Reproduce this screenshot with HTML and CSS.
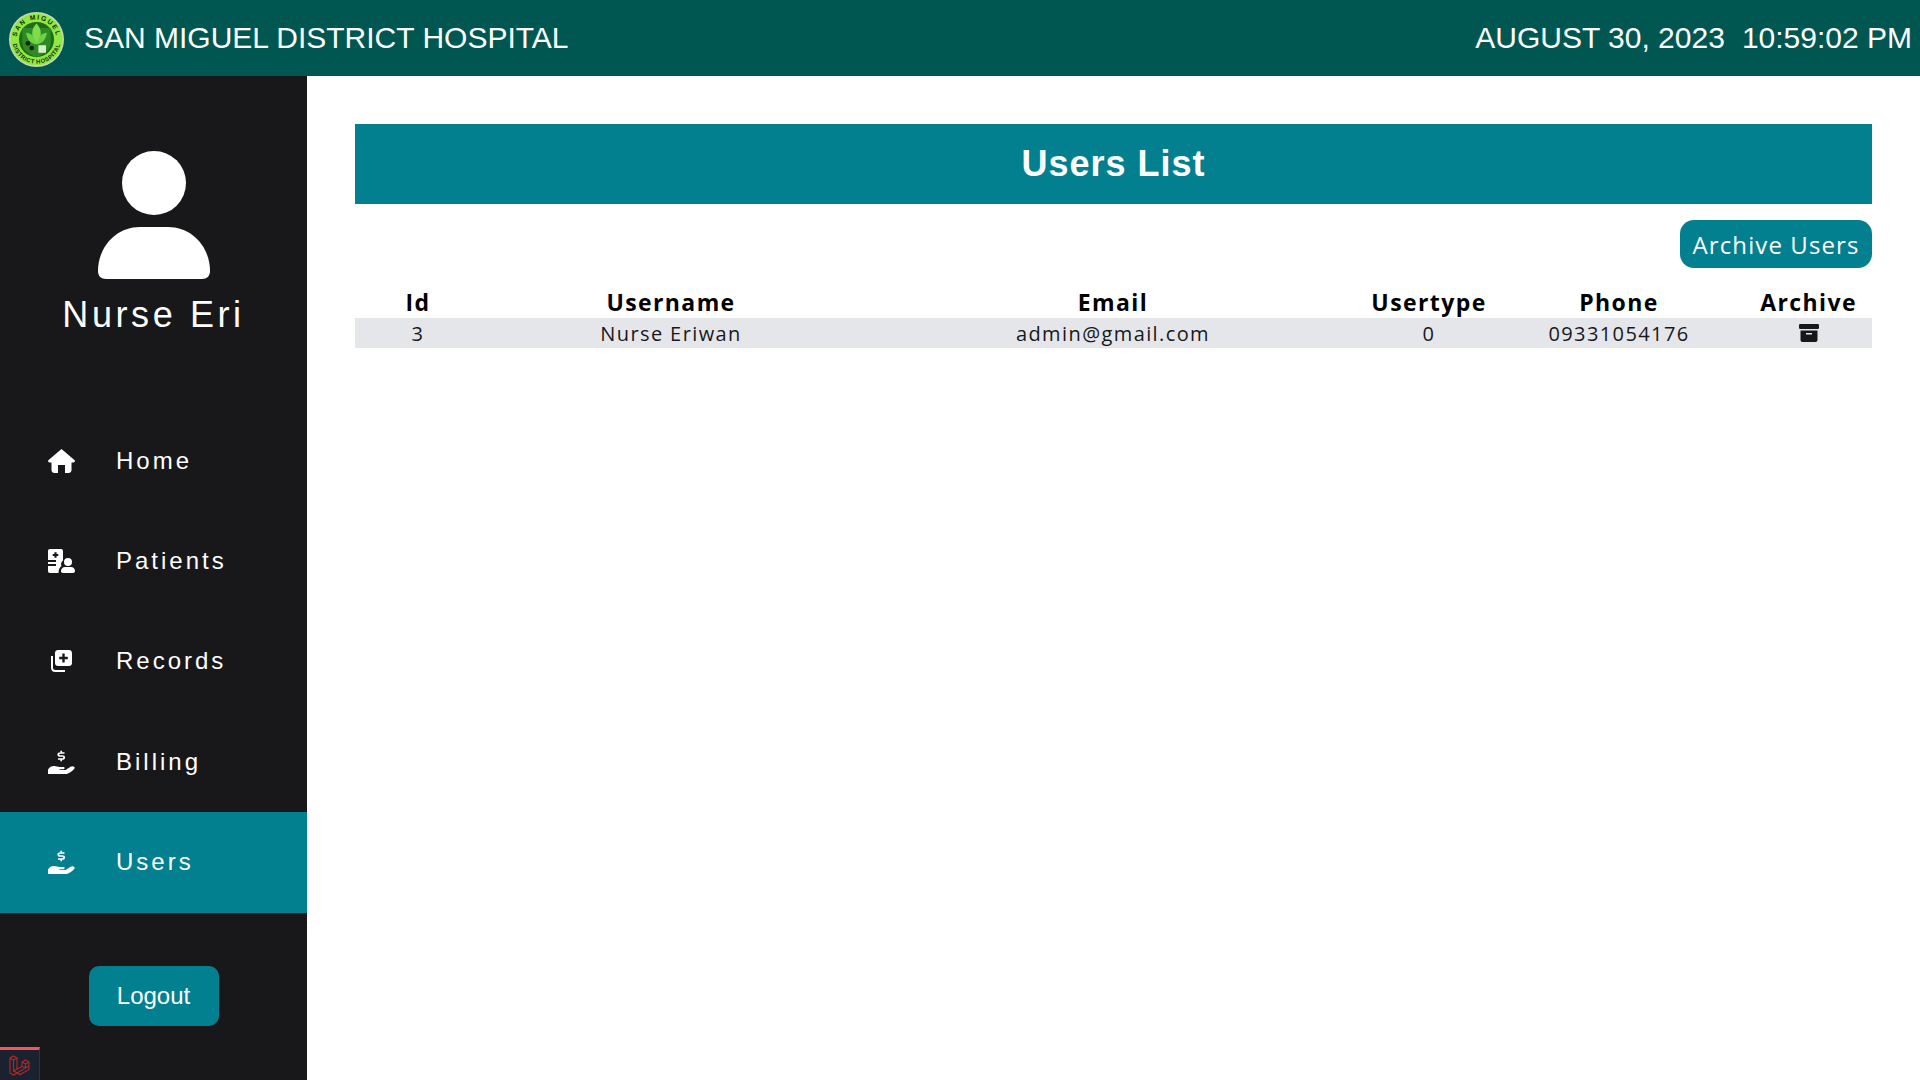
FILE: index.html
```html
<!DOCTYPE html>
<html lang="en">
<head>
    <meta charset="UTF-8">
    <title>Users List</title>
    <link rel="stylesheet" href="styles.css">
</head>
<body>
    <header class="topbar">
        <div class="brand">
            <svg class="logo" viewBox="0 0 58 58">
                <defs>
                    <path id="arcTop" d="M8 29a21 21 0 0 1 42 0"/>
                    <path id="arcBottom" d="M3.5 29a25.5 25.5 0 0 0 51 0"/>
                </defs>
                <circle cx="29" cy="29" r="29" fill="#c9d6b8"/>
                <circle cx="29" cy="29" r="27.5" fill="#8fea3e"/>
                <circle cx="29" cy="29" r="18.5" fill="#1f6b1c"/>
                <path d="M14 17h30v15c0 9-8 13-15 16-7-3-15-7-15-16z" fill="#2d8a24"/>
                <path d="M29 12c6 6 6 14 0 22-6-8-6-16 0-22z" fill="#7fdc4b"/>
                <path d="M18 22c5 0 9 4 11 12-6 0-10-5-11-12zM40 22c-5 0-9 4-11 12 6 0 10-5 11-12z" fill="#6fcf45"/>
                <rect x="31" y="35" width="8" height="8" fill="#d7ecc8"/>
                <circle cx="20" cy="33" r="2.5" fill="#0c2410"/>
                <circle cx="24" cy="38" r="2.5" fill="#0c2410"/>
                <text class="logo-text"><textPath href="#arcTop" startOffset="50%" text-anchor="middle">SAN MIGUEL</textPath></text>
                <text class="logo-text logo-text-small"><textPath href="#arcBottom" startOffset="50%" text-anchor="middle">DISTRICT HOSPITAL</textPath></text>
            </svg>
            <span class="brand-name">SAN MIGUEL DISTRICT HOSPITAL</span>
        </div>
        <div class="clock"><span>AUGUST 30, 2023</span><span>10:59:02 PM</span></div>
    </header>

    <div class="layout">
        <aside class="sidebar">
            <div class="profile">
                <svg class="avatar" viewBox="0 0 112 128">
                    <circle cx="56" cy="32" r="32"/>
                    <path d="M42 76h28c24 0 42 20 42 44 0 5-3 8-8 8H8c-5 0-8-3-8-8 0-24 18-44 42-44z"/>
                </svg>
                <div class="profile-name">Nurse Eri</div>
            </div>

            <nav class="nav">
                <a class="nav-item">
                    <svg class="nav-icon" viewBox="0 0 27 24"><path d="M13.5 0 26.4 11c1 1 .4 2.4-1 2.4H23.5V21c0 1.800-1.300 3-3 3h-3.500v-8H10v8H6.500c-1.700 0-3-1.200-3-3v-7.600H1.600c-1.400 0-2-1.400-1-2.400z"/></svg>
                    <span>Home</span>
                </a>
                <a class="nav-item">
                    <svg class="nav-icon" viewBox="0 0 27 24">
                        <path fill-rule="evenodd" d="M2 0H13c1.200 0 2 .8 2 2V11.500c-2 1.500-2.400 3.800-1.500 5.500-2 1.300-3 3.800-3 7H2c-1.200 0-2-.8-2-2V17H8V15H0V13H8V11H0V2C0 .8.800 0 2 0ZM6.400 3.200V4.900H4.700V7.100H6.400V8.800H8.600V7.100H10.300V4.900H8.600V3.200Z"/>
                        <circle cx="20" cy="13" r="4"/>
                        <path d="M17 18h6c2.300 0 4 1.700 4 4 0 1.200-.8 2-2 2H15c-1.200 0-2-.8-2-2 0-2.300 1.700-4 4-4z"/>
                    </svg>
                    <span>Patients</span>
                </a>
                <a class="nav-item">
                    <svg class="nav-icon" viewBox="0 0 27 24">
                        <path fill-rule="evenodd" d="M10 1H21c1.700 0 3 1.300 3 3V14c0 1.700-1.300 3-3 3H10c-1.700 0-3-1.300-3-3V4c0-1.700 1.300-3 3-3ZM14.300 4.500V7.700H11.200V10.300H14.300V13.500H16.700V10.300H19.800V7.700H16.700V4.500Z"/>
                        <path class="icon-line" d="M4 7V18.500C4 20.500 5.500 22 7.500 22H17"/>
                    </svg>
                    <span>Records</span>
                </a>
                <a class="nav-item">
                    <svg class="nav-icon" viewBox="0 0 27 24">
                        <path class="icon-dollar" d="M16.500 3H12.500C9.500 3 9.500 6 12.500 6H14C17 6 17 9 14 9H10M13.200 .8V3M13.200 9V11.200"/>
                        <path d="M0 19.500c1.500-2.500 3.500-3.500 6-3.500 2.500 0 3.500 1 6 1h3.500c1.500 0 1.500 2.200 0 2.200h-4v.8H17c1.500 0 5-3.800 7.500-3.800 1.800 0 2.800 1.500 1.700 2.700-2 2-5.500 5.100-8.700 5.100H0z"/>
                    </svg>
                    <span>Billing</span>
                </a>
                <a class="nav-item active">
                    <svg class="nav-icon" viewBox="0 0 27 24">
                        <path class="icon-dollar" d="M16.500 3H12.500C9.500 3 9.500 6 12.500 6H14C17 6 17 9 14 9H10M13.200 .8V3M13.200 9V11.200"/>
                        <path d="M0 19.500c1.500-2.500 3.500-3.500 6-3.500 2.500 0 3.500 1 6 1h3.500c1.500 0 1.500 2.200 0 2.200h-4v.8H17c1.500 0 5-3.800 7.500-3.800 1.800 0 2.800 1.500 1.700 2.700-2 2-5.500 5.100-8.700 5.100H0z"/>
                    </svg>
                    <span>Users</span>
                </a>
            </nav>

            <div class="logout-wrap">
                <button class="logout-btn">Logout</button>
            </div>
        </aside>

        <main class="content">
            <h1 class="page-title">Users List</h1>
            <div class="actions">
                <button class="archive-btn">Archive Users</button>
            </div>
            <table class="users-table">
                <colgroup>
                    <col class="col-id"><col class="col-username"><col class="col-email"><col class="col-type"><col class="col-phone"><col class="col-archive">
                </colgroup>
                <thead>
                    <tr>
                        <th>Id</th>
                        <th>Username</th>
                        <th>Email</th>
                        <th>Usertype</th>
                        <th>Phone</th>
                        <th>Archive</th>
                    </tr>
                </thead>
                <tbody>
                    <tr>
                        <td>3</td>
                        <td>Nurse Eriwan</td>
                        <td>admin@gmail.com</td>
                        <td>0</td>
                        <td>09331054176</td>
                        <td>
                            <svg class="archive-icon" viewBox="0 0 20 18"><rect width="20" height="5" rx="1.2"/><path d="M1.500 6.500h17V16c0 1.200-.8 2-2 2h-13c-1.200 0-2-.8-2-2zM7 9v1.500h6V9z" fill-rule="evenodd"/></svg>
                        </td>
                    </tr>
                </tbody>
            </table>
        </main>
    </div>

    <div class="debug-tab">
        <svg class="debug-logo" viewBox="0 0 21 21"><path d="M1 3 4.500 1 8 3V14L13 11.500V7L16.500 5 20 7V11L8 18 4.500 20 1 18V3ZM1 3 4.500 5 8 3M4.500 5V16L8 14M4.500 16 11 19.500 20 14.500V11M13 7 16.500 9 20 7M16.500 9V13M13 11.500 16.500 13"/></svg>
    </div>
</body>
</html>
```

FILE: styles.css
```css
* {
    box-sizing: border-box;
}
body {
    margin: 0;
    height: 100vh;
    display: flex;
    flex-direction: column;
    overflow: hidden;
    background: #fff;
    font-family: "Liberation Sans", Arial, sans-serif;
}

/* top bar */
.topbar {
    height: 76px;
    flex: none;
    display: flex;
    align-items: center;
    justify-content: space-between;
    padding: 0 8px 0 9px;
    background: #005752;
    color: #fff;
    font-size: 30px;
}
.brand {
    display: flex;
    align-items: center;
    gap: 20px;
}
.logo {
    width: 55px;
    height: 55px;
    margin-top: 3px;
}
.logo-text {
    font-family: "Liberation Sans", sans-serif;
    font-size: 7px;
    font-weight: bold;
    letter-spacing: 1.6px;
    fill: #122a14;
}
.logo-text-small {
    font-size: 6.2px;
    letter-spacing: .5px;
}
.clock {
    display: flex;
    gap: 17px;
}

.layout {
    flex: 1;
    display: flex;
    min-height: 0;
}

/* sidebar */
.sidebar {
    width: 307px;
    flex: none;
    display: flex;
    flex-direction: column;
    background: #18181b;
    color: #fff;
}
.profile {
    padding-top: 75px;
    display: flex;
    flex-direction: column;
    align-items: center;
}
.avatar {
    width: 112px;
    height: 128px;
    fill: #fff;
}
.profile-name {
    margin-top: 15px;
    font-size: 36px;
    line-height: 42px;
    letter-spacing: 3.6px;
}
.nav {
    margin-top: 75px;
    display: flex;
    flex-direction: column;
}
.nav-item {
    height: 100.2px;
    display: flex;
    align-items: center;
    gap: 41px;
    padding-left: 48px;
    font-size: 24px;
    letter-spacing: 3px;
    color: #fff;
}
.nav-item.active {
    height: 101px;
    background: #028090;
}
.nav-icon {
    width: 27px;
    height: 24px;
    fill: #fff;
}
.icon-dollar {
    fill: none;
    stroke: #fff;
    stroke-width: 1.7;
}
.icon-line {
    fill: none;
    stroke: #fff;
    stroke-width: 2;
}
.logout-wrap {
    margin-top: 53px;
    display: flex;
    justify-content: center;
}
.logout-btn {
    width: 130px;
    height: 60px;
    border: none;
    border-radius: 10px;
    background: #028090;
    color: #fff;
    font-family: "Liberation Sans", Arial, sans-serif;
    font-size: 24px;
}

/* main */
.content {
    flex: 1;
    padding: 48px 48px 0;
}
.page-title {
    margin: 0;
    height: 80px;
    line-height: 80px;
    text-align: center;
    background: #028090;
    color: #fff;
    font-size: 36px;
    letter-spacing: 1px;
}
.actions {
    margin-top: 16px;
    display: flex;
    justify-content: flex-end;
}
.archive-btn {
    width: 192px;
    height: 48px;
    padding: 0;
    border: none;
    border-radius: 14px;
    background: #028090;
    color: #fff;
    font-family: "Open Sans", "Noto Sans", sans-serif;
    font-size: 24px;
    letter-spacing: 1.1px;
}
.users-table {
    width: 100%;
    margin-top: 20px;
    border-collapse: collapse;
    table-layout: fixed;
    font-family: "Open Sans", "Noto Sans", sans-serif;
    color: #000;
    text-align: center;
}
.col-id { width: 126px; }
.col-username { width: 380px; }
.col-email { width: 504px; }
.col-type { width: 128px; }
.col-phone { width: 252px; }
.col-archive { width: 127px; }
.users-table th {
    height: 30px;
    padding: 0 0 2px;
    font-size: 23px;
    line-height: 28px;
    letter-spacing: 1.4px;
}
.users-table td {
    height: 30px;
    padding: 2px 0 0;
    background: #e5e6ea;
    font-size: 20px;
    line-height: 28px;
    letter-spacing: 1.4px;
    color: #18181b;
}
.archive-icon {
    display: block;
    width: 20px;
    height: 18px;
    margin: 0 auto 3px;
    fill: #18181b;
}

/* debugbar tab in the corner */
.debug-tab {
    position: fixed;
    left: 0;
    bottom: 0;
    width: 40px;
    height: 33px;
    display: flex;
    align-items: center;
    justify-content: center;
    background: #1a2230;
    border-top: 3px solid #f4545c;
    border-right: 1px solid #2a3446;
}
.debug-logo {
    width: 21px;
    height: 21px;
    fill: none;
    stroke: #b3282d;
    stroke-width: 1.1;
}
```
